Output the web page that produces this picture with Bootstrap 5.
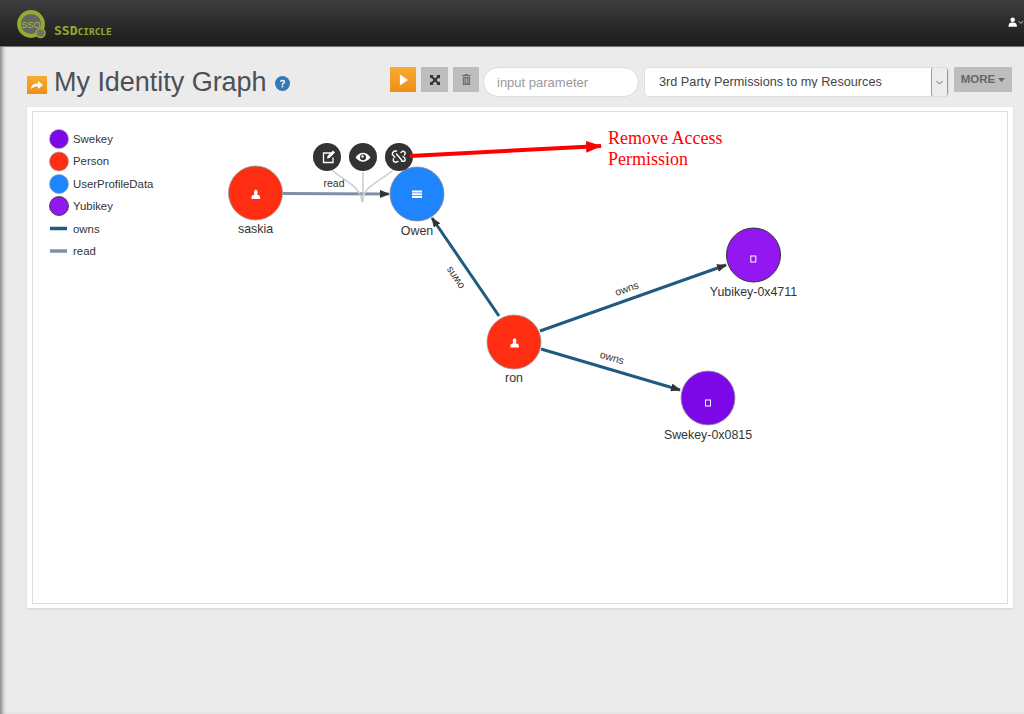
<!DOCTYPE html>
<html lang="en">
<head>
<meta charset="utf-8">
<title>My Identity Graph</title>
<link href="https://cdn.jsdelivr.net/npm/bootstrap@5.3.0/dist/css/bootstrap.min.css" rel="stylesheet">
<style>
html,body{height:100%;overflow:hidden}
body{font-family:"Liberation Sans",Arial,sans-serif;background:#ebebeb;color:#444}
.topbar{height:47px;padding:0;background:linear-gradient(#3d3d3d,#1b1b1b);border-bottom:1px solid #777;align-items:flex-start}
.brand-wrap{margin:9px 0 0 16px;gap:6px}
.brand-text{font-family:"DejaVu Sans Mono",monospace;font-weight:700;font-size:13px;color:#93ab2f;line-height:1;margin-top:15px}
.brand-text span{font-size:9.500px}
.user-wrap{margin:17px 0 0 auto;gap:1px;width:16px;overflow:hidden}
.page-body{height:667px;padding:20px 11px 0 27px;box-shadow:inset 5px 0 4px -3px #777}
.head-row{height:40px}
.page-title{font-size:27px;font-weight:400;color:#4c5056;margin:0;line-height:31px;gap:7px;padding-top:0;letter-spacing:-.03px}
.title-icon{margin-top:9px}
.help-icon{margin-left:1px;margin-top:9px}
.tool-row{gap:5px;margin-right:1px}
.tool-btn{height:25px;padding:0;border:0;border-radius:0;display:flex;align-items:center;justify-content:center;background:#bdbdbd}
.tool-btn:hover{background:#bdbdbd}
.tool-play{width:26px;background:linear-gradient(#f9aa33,#ee8f17)}
.tool-play:hover{background:linear-gradient(#f9aa33,#ee8f17)}
.tool-wide{width:27px}
.tool-narrow{width:26px}
.param-input{width:156px;height:30px;border-radius:15px;font-size:13px;padding:0 13px;border-color:#ddd;margin-left:-1px;color:#444}
.param-input::placeholder{color:#999}
.perm-select{width:305px;height:30px;font-size:12.700px;line-height:1;color:#444;padding:0 20px 0 14px;border-color:#ddd;border-radius:4px;background-size:17px 30px;background-position:right center;background-image:url("data:image/svg+xml,%3Csvg xmlns='http://www.w3.org/2000/svg' width='17' height='30'%3E%3Crect x='.5' y='.5' width='16' height='29' rx='2' fill='%23ececec' stroke='%23999'/%3E%3Cpath d='M5.5 14l3 3 3-3' fill='none' stroke='%23666'/%3E%3C/svg%3E")}
.more-btn{width:58px;font-size:11.500px;font-weight:700;color:#666;gap:3px}
.more-btn:hover{color:#666}
.graph-card{height:501px;padding:4px 5px;border:0;border-radius:0;margin-top:0;box-shadow:0 1px 2px #d5d5d5}
.graph-box{height:493px;border:1px solid #ddd}
.graph-box svg{display:block}
.g-legend{font-family:"Liberation Sans",Arial,sans-serif;font-size:11.400px;fill:#333}
.g-label{font-family:"Liberation Sans",Arial,sans-serif;font-size:12.400px;fill:#333}
.g-edge{font-family:"Liberation Sans",Arial,sans-serif;font-size:10.500px;fill:#333}
.g-note{font-family:"Liberation Serif","Times New Roman",serif;font-size:18px;fill:#f00}
</style>
</head>
<body>
<nav class="navbar topbar d-flex">
  <div class="brand-wrap d-flex">
    <svg width="32" height="32" viewBox="0 0 32 32" aria-hidden="true">
      <circle cx="15" cy="15" r="12" fill="#666" stroke="#93ab2f" stroke-width="3.800"/>
      <text x="15" y="18.500" text-anchor="middle" font-family="Liberation Sans,sans-serif" font-size="9" fill="#a4bb3e">SSO</text>
      <circle cx="24.500" cy="24" r="4.500" fill="#707070" stroke="#93ab2f" stroke-width="1.600"/>
    </svg>
    <div class="brand-text">SSD<span>CIRCLE</span></div>
  </div>
  <div class="user-wrap d-flex align-items-center">
    <svg width="10" height="10" viewBox="0 0 10 10" aria-hidden="true"><circle cx="5" cy="2.600" r="2.400" fill="#fff"/><path d="M.5 10c0-3 1-4.600 4.500-4.600S9.500 7 9.500 10z" fill="#fff"/></svg>
    <svg width="6" height="6" viewBox="0 0 6 6" aria-hidden="true"><path d="M.5 2l2.500 2.500L5.500 2" fill="none" stroke="#ccc"/></svg>
  </div>
</nav>
<main class="page-body">
  <div class="head-row d-flex align-items-start justify-content-between">
    <h1 class="page-title d-flex align-items-start">
      <svg class="title-icon" width="20" height="18" viewBox="0 0 20 18" aria-hidden="true"><defs><linearGradient id="og" x1="0" y1="0" x2="0" y2="1"><stop offset="0" stop-color="#f9aa33"/><stop offset="1" stop-color="#ee8f17"/></linearGradient></defs><rect width="20" height="18" fill="url(#og)"/><path d="M4 13c0-4 3-5.500 7-5.500V5l5 4-5 4v-2.500c-3 0-5 .5-7 2.500z" fill="#fff"/></svg>
      <span>My Identity Graph</span>
      <svg class="help-icon" width="15" height="15" viewBox="0 0 15 15" aria-hidden="true"><circle cx="7.500" cy="7.500" r="7.500" fill="#337ab7"/><path d="M5 5.700c.2-1.400 1.200-2 2.600-2 1.500 0 2.500.8 2.500 2 0 1.800-2 1.700-2 3.200H6.700c0-2 1.900-2.100 1.900-3.100 0-.5-.4-.8-1-.8s-1 .3-1.100.9z" fill="#fff"/><rect x="6.700" y="9.700" width="1.500" height="1.700" fill="#fff"/></svg>
    </h1>
    <div class="tool-row d-flex align-items-start">
      <button type="button" class="btn tool-btn tool-play" aria-label="Run"><svg width="9" height="12" viewBox="0 0 10 12"><path d="M1 0l9 6-9 6z" fill="#fff"/></svg></button>
      <button type="button" class="btn tool-btn tool-wide" aria-label="Fullscreen"><svg width="10" height="10" viewBox="0 0 11 11"><path d="M0 0h4L2.800 1.200 5.500 3.900 8.200 1.200 7 0h4v4L9.800 2.800 7.100 5.500 9.800 8.200 11 7v4H7l1.200-1.200L5.500 7.100 2.800 9.800 4 11H0V7l1.200 1.200L3.900 5.500 1.200 2.800 0 4z" fill="#333"/></svg></button>
      <button type="button" class="btn tool-btn tool-narrow" aria-label="Delete"><svg width="9" height="11" viewBox="0 0 10 12"><path d="M3.500 0h3l.5 1h3v1.200H0V1h3zM1 3h8v9H1zM2.800 4.500v6h.8v-6zM4.600 4.500v6h.8v-6zM6.400 4.500v6h.8v-6z" fill="#707070" fill-rule="evenodd"/></svg></button>
      <input type="text" class="form-control param-input" placeholder="input parameter">
      <select class="form-select perm-select"><option>3rd Party Permissions to my Resources</option></select>
      <button type="button" class="btn tool-btn more-btn">MORE<svg width="7" height="4" viewBox="0 0 7 4"><path d="M0 0h7L3.500 4z" fill="#666"/></svg></button>
    </div>
  </div>
  <div class="card graph-card">
    <div class="graph-box">
      <svg width="974" height="491" viewBox="33 112 974 491" role="img" aria-label="Identity graph">
        <defs>
          <marker id="ah" markerWidth="10" markerHeight="8" refX="9" refY="4" orient="auto" markerUnits="userSpaceOnUse"><path d="M0 0l10 4-10 4z" fill="#333"/></marker>
          <marker id="rh" markerWidth="16" markerHeight="12" refX="15" refY="6" orient="auto" markerUnits="userSpaceOnUse"><path d="M0 0l16 6-16 6z" fill="#f00"/></marker>
        </defs>
        <!-- legend -->
        <circle cx="59" cy="139" r="9.500" fill="#7c08e8" stroke="#999" stroke-width=".6"/>
        <circle cx="59" cy="161.500" r="9.500" fill="#ff2e12" stroke="#999" stroke-width=".6"/>
        <circle cx="59" cy="184" r="9.500" fill="#1e85ff" stroke="#999" stroke-width=".6"/>
        <circle cx="59" cy="206" r="9.500" fill="#9217f0" stroke="#333" stroke-width=".8"/>
        <line x1="50" y1="228.500" x2="67" y2="228.500" stroke="#1f5a80" stroke-width="3.500"/>
        <line x1="50" y1="251" x2="67" y2="251" stroke="#7f8fa9" stroke-width="3.500"/>
        <text class="g-legend" x="73" y="143">Swekey</text>
        <text class="g-legend" x="73" y="165">Person</text>
        <text class="g-legend" x="73" y="188">UserProfileData</text>
        <text class="g-legend" x="73" y="210">Yubikey</text>
        <text class="g-legend" x="73" y="233">owns</text>
        <text class="g-legend" x="73" y="255">read</text>
        <!-- edges -->
        <line x1="283" y1="193.500" x2="389" y2="194" stroke="#7f8fa9" stroke-width="3" marker-end="url(#ah)"/>
        <line x1="499" y1="316" x2="432" y2="218" stroke="#1f5a80" stroke-width="3" marker-end="url(#ah)"/>
        <line x1="540" y1="331" x2="726" y2="265" stroke="#1f5a80" stroke-width="3" marker-end="url(#ah)"/>
        <line x1="541" y1="349" x2="680" y2="390" stroke="#1f5a80" stroke-width="3" marker-end="url(#ah)"/>
        <text class="g-edge" x="334" y="187" text-anchor="middle">read</text>
        <text class="g-edge" text-anchor="middle" transform="translate(458,276) rotate(-124)">owns</text>
        <text class="g-edge" text-anchor="middle" transform="translate(628,292) rotate(-19.500)">owns</text>
        <text class="g-edge" text-anchor="middle" transform="translate(611,361) rotate(16)">owns</text>
        <!-- menu connectors -->
        <path d="M332 170C345 182 361 186 362 202M363 172V202M393 170C380 182 363 186 362 202" fill="none" stroke="#ccc" stroke-width="1.500"/>
        <!-- nodes -->
        <circle cx="255.500" cy="193" r="27" fill="#ff2e12" stroke="#999" stroke-width=".8"/>
        <circle cx="417" cy="194" r="27" fill="#1e85ff" stroke="#888" stroke-width=".8"/>
        <circle cx="514" cy="342" r="27" fill="#ff2e12" stroke="#999" stroke-width=".8"/>
        <circle cx="753.500" cy="255" r="27" fill="#9217f0" stroke="#333" stroke-width="1"/>
        <circle cx="708" cy="398" r="27" fill="#7c08e8" stroke="#999" stroke-width=".8"/>
        <!-- node icons -->
        <path d="M254 192.500c0-1.500.5-2.800 1.800-2.800s1.800 1.300 1.800 2.800c0 1-.4 1.500-.5 2 .5.600 3 .8 3 2.500v2h-8.600v-2c0-1.700 2.500-1.900 3-2.500-.1-.5-.5-1-.5-2z" fill="#fff"/>
        <path d="M512.800 341c0-1.500.5-2.800 1.800-2.800s1.800 1.300 1.800 2.800c0 1-.4 1.500-.5 2 .5.600 3 .8 3 2.500v2h-8.600v-2c0-1.700 2.500-1.900 3-2.500-.1-.5-.5-1-.5-2z" fill="#fff"/>
        <path d="M412 194h10v2h-10zM412 196.800h10v2h-10zM412 199.600h10v2h-10z" transform="translate(0,-3.500)" fill="#fff"/>
        <rect x="750.800" y="257" width="5" height="6" transform="translate(0,-1)" fill="none" stroke="#fff" stroke-width="1"/>
        <rect x="705.500" y="401" width="5" height="6" transform="translate(0,-1)" fill="none" stroke="#fff" stroke-width="1"/>
        <text class="g-label" x="255.500" y="233" text-anchor="middle">saskia</text>
        <text class="g-label" x="417" y="235" text-anchor="middle">Owen</text>
        <text class="g-label" x="514" y="382" text-anchor="middle">ron</text>
        <text class="g-label" x="753.500" y="296" text-anchor="middle">Yubikey-0x4711</text>
        <text class="g-label" x="708" y="439" text-anchor="middle">Swekey-0x0815</text>
        <!-- menu -->
        <circle cx="327" cy="157" r="14" fill="#333"/>
        <circle cx="363" cy="157" r="14" fill="#333"/>
        <circle cx="399" cy="157" r="14" fill="#333"/>
        <path d="M331 153h-7.500v9.500h9.500v-5" fill="none" stroke="#fff" stroke-width="1.300"/>
        <path d="M327 158.500l.5-2.500 5.500-5.500 2 2-5.500 5.500z" fill="#fff"/>
        <path d="M355.500 157.500c2.500-3.600 5-4.800 7.500-4.800s5 1.200 7.500 4.800c-2.500 3.200-5 4.300-7.500 4.300s-5-1.100-7.500-4.300z" fill="#fff"/>
        <circle cx="363" cy="157.300" r="3" fill="#333"/><circle cx="362.500" cy="156.500" r="1.200" fill="#fff"/>
        <path d="M396.500 151l-2.500.2-1.300 1.500c-.8 1.200 0 2.600 1.200 3.500l1 .8M393.500 158.500l-.2 1.500c0 1.300 1.200 2.200 2.700 2.200l2-.8M401 152.500l1.500-1.200c1.200-.3 2.500.5 2.700 1.700l-.7 2M401.500 161c1.700.8 3.500.2 3.700-1.200.1-1.200-.8-2.500-2.200-3.300M396.500 154l5.500 6.500" fill="none" stroke="#fff" stroke-width="1.400" stroke-linecap="round"/>
        <!-- annotation -->
        <line x1="410" y1="156" x2="601" y2="146" stroke="#f00" stroke-width="4" marker-end="url(#rh)"/>
        <text class="g-note" x="608" y="144">Remove Access</text>
        <text class="g-note" x="608" y="165">Permission</text>
      </svg>
    </div>
  </div>
</main>
<script src="https://cdn.jsdelivr.net/npm/bootstrap@5.3.0/dist/js/bootstrap.bundle.min.js"></script>
</body>
</html>
